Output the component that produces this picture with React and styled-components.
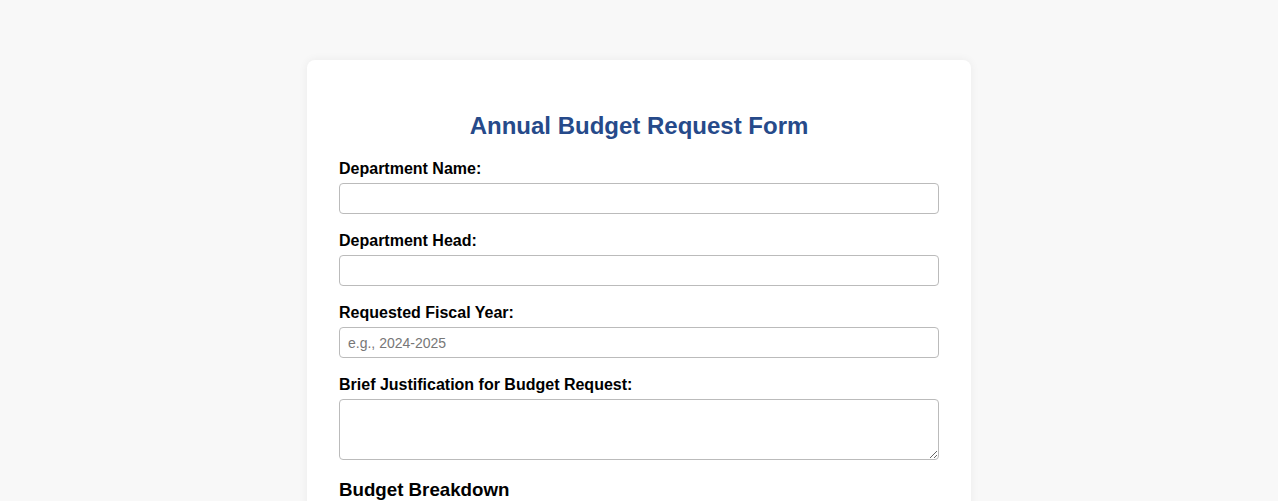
import React from 'react';
import styled, { createGlobalStyle } from 'styled-components';

const GlobalStyle = createGlobalStyle`
  body {
    margin: 0;
    background: #f8f8f8;
    font-family: "Liberation Sans", Arial, sans-serif;
    color: #000;
  }
`;

const Page = styled.div`
  padding: 60px 0;
`;

const Card = styled.form`
  width: 600px;
  margin: 0 auto;
  padding: 32px;
  background: #fff;
  border-radius: 8px;
  box-shadow: 0 0 10px rgba(0, 0, 0, 0.06);
`;

const Title = styled.h1`
  margin: 20px 0 20px;
  text-align: center;
  font-size: 24px;
  font-weight: bold;
  color: #264a8a;
`;

const Field = styled.div`
  margin-bottom: 18px;
`;

const Label = styled.label`
  display: block;
  margin-bottom: 5px;
  font-size: 16px;
  line-height: 18px;
  font-weight: bold;
`;

const Input = styled.input`
  display: block;
  box-sizing: border-box;
  width: 100%;
  height: 31px;
  padding: 0 8px;
  border: 1px solid #bbb;
  border-radius: 4px;
  font-family: "Liberation Sans", Arial, sans-serif;
  font-size: 14px;

  &::placeholder {
    color: #777;
  }
`;

const TextArea = styled.textarea`
  display: block;
  box-sizing: border-box;
  width: 100%;
  height: 61px;
  padding: 8px;
  border: 1px solid #bbb;
  border-radius: 4px;
  font-family: "Liberation Sans", Arial, sans-serif;
  font-size: 14px;
`;

const Section = styled.h3`
  margin: 19px 0 10px;
  font-size: 18.72px;
  font-weight: bold;
`;

export default function App() {
  return (
    <Page>
      <GlobalStyle />
      <Card>
        <Title>Annual Budget Request Form</Title>
        <Field>
          <Label>Department Name:</Label>
          <Input type="text" />
        </Field>
        <Field>
          <Label>Department Head:</Label>
          <Input type="text" />
        </Field>
        <Field>
          <Label>Requested Fiscal Year:</Label>
          <Input type="text" placeholder="e.g., 2024-2025" />
        </Field>
        <Field>
          <Label>Brief Justification for Budget Request:</Label>
          <TextArea />
        </Field>
        <Section>Budget Breakdown</Section>
      </Card>
    </Page>
  );
}
